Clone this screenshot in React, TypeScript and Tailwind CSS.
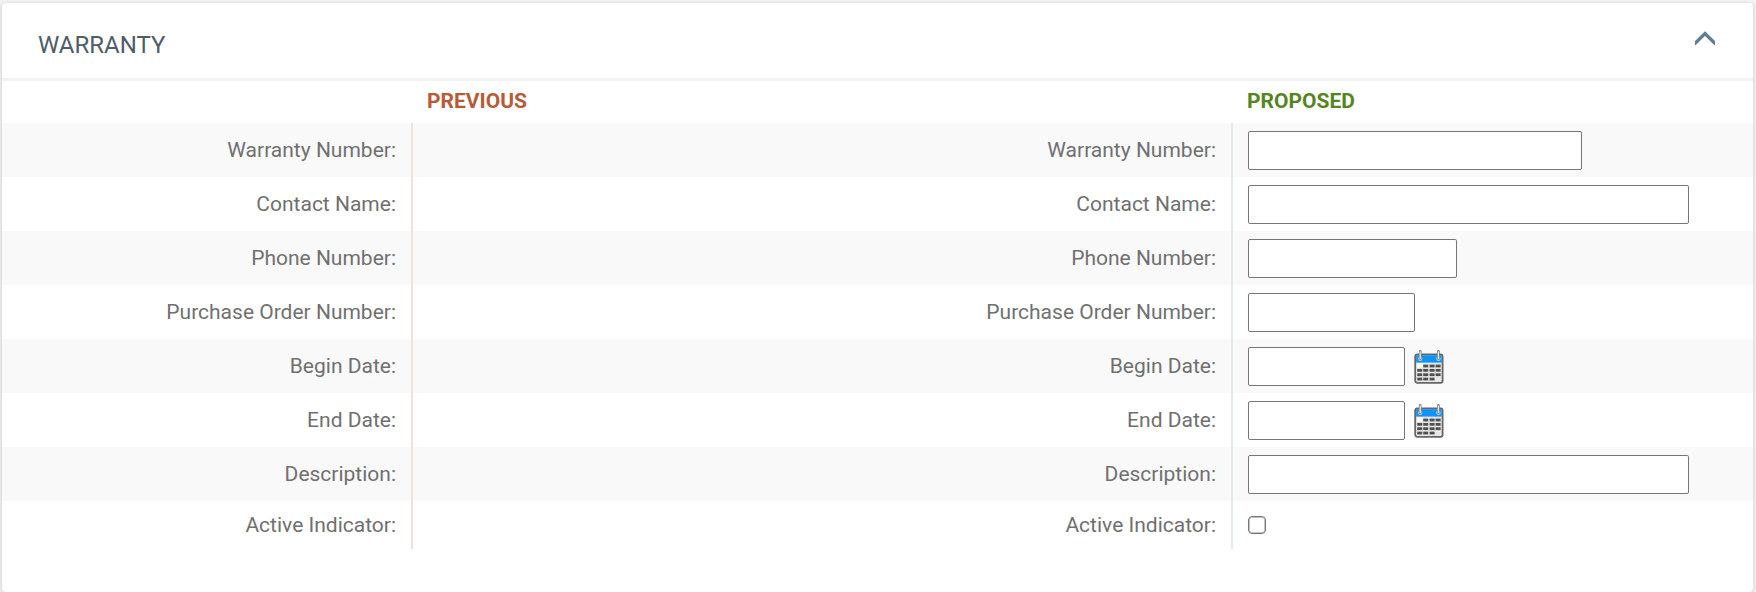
import { useState } from "react";

type Field = {
  id: string;
  label: string;
  kind: "text" | "date" | "checkbox";
  width?: string;
};

const FIELDS: Field[] = [
  { id: "warrantyNumber", label: "Warranty Number:", kind: "text", width: "w-[334px]" },
  { id: "contactName", label: "Contact Name:", kind: "text", width: "w-[441px]" },
  { id: "phoneNumber", label: "Phone Number:", kind: "text", width: "w-[209px]" },
  { id: "purchaseOrder", label: "Purchase Order Number:", kind: "text", width: "w-[167px]" },
  { id: "beginDate", label: "Begin Date:", kind: "date", width: "w-[157px]" },
  { id: "endDate", label: "End Date:", kind: "date", width: "w-[157px]" },
  { id: "description", label: "Description:", kind: "text", width: "w-[441px]" },
  { id: "active", label: "Active Indicator:", kind: "checkbox" },
];

const COLUMNS = "grid grid-cols-[411fr_409fr_411fr_520fr]";
const LABEL = "flex items-center justify-end border-r-2 pr-[15px] text-right";

// filled day cells: [row, column]
const DAYS = [
  [0, 1], [0, 2], [0, 3],
  [1, 0], [1, 1], [1, 2], [1, 3],
  [2, 0], [2, 1], [2, 2], [2, 3],
  [3, 0], [3, 1], [3, 2],
];

function CalendarIcon() {
  return (
    <svg width="30" height="36" viewBox="0 -2 30 36" aria-hidden="true">
      <rect x="1.2" y="4.4" width="27.4" height="28.4" rx="2" fill="#e8e8e8" stroke="#666" strokeWidth="1.8" />
      <rect x="2.1" y="5.2" width="25.6" height="7.4" fill="#0f93f5" />
      <rect x="3" y="13.4" width="6" height="4.2" fill="#fff" />
      {DAYS.map(([r, c]) => (
        <rect
          key={`${r}-${c}`}
          x={[3.2, 9.2, 15.6, 21.6][c]}
          y={14.6 + r * 4.35}
          width="5"
          height="2.8"
          fill="#505050"
        />
      ))}
      {[6.2, 24.4].map((x) => (
        <g key={x}>
          <circle cx={x} cy="8.8" r="2.2" fill="#a9d3f0" />
          <path d={`M${x} 1.4V8.8`} stroke="#777" strokeWidth="2.6" strokeLinecap="round" />
          <path d={`M${x} 1.8V8.6`} stroke="#ececec" strokeWidth="1.3" strokeLinecap="round" />
        </g>
      ))}
    </svg>
  );
}

function FieldInput({ field }: { field: Field }) {
  if (field.kind === "checkbox") {
    return (
      <input
        id={field.id}
        type="checkbox"
        className="size-[18px] appearance-none rounded-[4px] border border-[#767676] bg-white inset-ring inset-ring-[#c4c4c4] checked:bg-[#5f7f94]"
      />
    );
  }
  return (
    <>
      <input
        id={field.id}
        type="text"
        className={`h-[39px] rounded-[2px] border border-[#767676] bg-white px-2 ${field.width}`}
      />
      {field.kind === "date" ? (
        <button type="button" aria-label={`Pick ${field.label}`} className="ml-[9px]">
          <CalendarIcon />
        </button>
      ) : null}
    </>
  );
}

export default function App() {
  const [open, setOpen] = useState(true);

  return (
    <div className="bg-[#f3f3f3] pt-[3px] pr-[3px] pl-[2px] font-['Roboto',sans-serif] text-[21px] leading-7 text-[#707070]">
      <section className="rounded bg-white shadow-[0_1px_4px_rgba(0,0,0,0.2)]">
        <header className="flex items-start justify-between border-b-3 border-[#f2f2f2] pt-7 pr-[35px] pb-[19px] pl-9">
          <h2 className="text-[24px] text-[#4f5d68]">WARRANTY</h2>
          <button
            type="button"
            aria-label="Toggle warranty section"
            aria-expanded={open}
            onClick={() => setOpen(!open)}
            className="px-[3px]"
          >
            <svg
              width="20"
              height="14"
              viewBox="0 0 20 14"
              fill="none"
              stroke="#5f7f94"
              strokeWidth="3.4"
              className={open ? "" : "rotate-180"}
            >
              <path d="M-1 13.4L10 2.6l11 10.8" />
            </svg>
          </button>
        </header>

        {open ? (
          <div className="pb-[43px]">
            <div className={`${COLUMNS} h-[42px] pt-[6px] font-bold`}>
              <h3 className="col-start-2 pl-[14px] text-[#b85a37]">PREVIOUS</h3>
              <h3 className="col-start-4 pl-[14px] text-[#54851f]">PROPOSED</h3>
            </div>
            {FIELDS.map((f) => (
              <div
                key={f.id}
                className={`${COLUMNS} odd:bg-white even:bg-[#f9f9f9] ${
                  f.kind === "checkbox" ? "h-12" : "h-[54px]"
                }`}
              >
                <span className={`${LABEL} border-[#f1e1dc]`}>{f.label}</span>
                <span />
                <label htmlFor={f.id} className={`${LABEL} border-[#deebe7]`}>
                  {f.label}
                </label>
                <div className="flex items-center pl-[15px]">
                  <FieldInput field={f} />
                </div>
              </div>
            ))}
          </div>
        ) : null}
      </section>
    </div>
  );
}
